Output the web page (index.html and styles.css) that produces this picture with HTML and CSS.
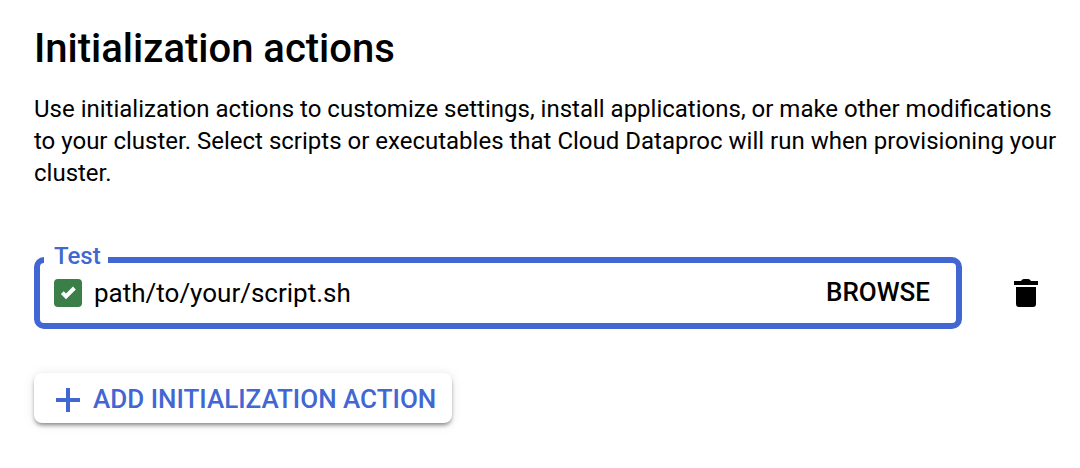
FILE: index.html
```html
<!DOCTYPE html>
<html lang="en">
<head>
<meta charset="utf-8">
<meta name="viewport" content="width=device-width, initial-scale=1">
<title>Initialization actions</title>
<link rel="stylesheet" href="styles.css">
</head>
<body>
<main class="section">
  <h1 class="title">Initialization actions</h1>
  <p class="description">Use initialization actions to customize settings, install applications, or make other modifications to your cluster. Select scripts or executables that Cloud Dataproc will run when provisioning your cluster.</p>
  <div class="action-row">
    <div class="field">
      <label class="field-label" for="script-path">Test</label>
      <input class="field-check" type="checkbox" aria-label="Enable script" checked>
      <input class="field-input" id="script-path" type="text" value="path/to/your/script.sh">
      <button class="browse" type="button">BROWSE</button>
    </div>
    <button class="delete" type="button" aria-label="Delete">
      <svg class="delete-icon" viewBox="0 0 24 28" aria-hidden="true">
        <path d="M0 2h7q1-2 3-2h4q2 0 3 2h7v4H0zM2 8h20v17q0 3-3 3H5q-3 0-3-3z"/>
      </svg>
    </button>
  </div>
  <button class="add" type="button">
    <svg class="add-icon" viewBox="0 0 24 24" aria-hidden="true"><path d="M10 0h4v10h10v4H14v10h-4V14H0v-4h10z"/></svg>
    ADD INITIALIZATION ACTION
  </button>
</main>
</body>
</html>
```
FILE: styles.css
```css
* {
  box-sizing: border-box;
}

body {
  margin: 0;
  background: #fff;
  color: #000;
  font-family: Roboto, "Liberation Sans", sans-serif;
  font-size: 24px;
}

button,
input {
  margin: 0;
  border: 0;
  padding: 0;
  background: none;
  color: inherit;
  font: inherit;
}

button {
  cursor: pointer;
}

.section {
  padding: 25px 22px 24px 34px;
}

.title {
  margin: 0 0 20px;
  font-size: 40px;
  font-weight: 500;
  line-height: 48px;
}

.description {
  margin: 0;
  line-height: 32px;
}

.action-row {
  display: flex;
  align-items: center;
  gap: 32px;
  margin: 68px 0 44px;
}

.field {
  position: relative;
  display: flex;
  flex: 1;
  align-items: center;
  gap: 12px;
  min-width: 0;
  height: 72px;
  padding: 0 26px 0 14px;
  border: 6px solid #4267d2;
  border-radius: 10px;
}

.field-label {
  position: absolute;
  top: -21px;
  left: 4px;
  padding: 0 7px 0 10px;
  background: #fff;
  color: #4267d2;
  font-weight: 500;
  line-height: 28px;
}

.field-check {
  flex: none;
  width: 28px;
  height: 28px;
  border-radius: 4px;
  appearance: none;
}

.field-check:checked {
  background: #3a7f48 url("data:image/svg+xml,%3Csvg xmlns='http://www.w3.org/2000/svg' viewBox='0 0 28 28'%3E%3Cpath d='M8.300 13.700l3.700 3.700L20.400 9' fill='none' stroke='white' stroke-width='4'/%3E%3C/svg%3E");
}

.field-input {
  flex: 1;
  min-width: 0;
  outline: 0;
  font-size: 26px;
  line-height: 32px;
}

.browse {
  padding-bottom: 2px;
  font-size: 26px;
  font-weight: 500;
  line-height: 32px;
}

.delete {
  display: flex;
  justify-content: center;
  width: 64px;
}

.delete-icon {
  width: 24px;
  height: 28px;
}

.add {
  display: flex;
  align-items: center;
  gap: 13px;
  padding: 10px 16px 8px 22px;
  border-radius: 8px;
  background: #fff;
  box-shadow: 0 3px 4px -1px rgb(0 0 0 / 45%), 0 1px 12px rgb(0 0 0 / 10%);
  color: #4267d2;
  font-size: 26px;
  font-weight: 500;
  line-height: 32px;
}

.add-icon {
  width: 24px;
  height: 24px;
  margin-top: 2px;
  fill: currentColor;
}
```
